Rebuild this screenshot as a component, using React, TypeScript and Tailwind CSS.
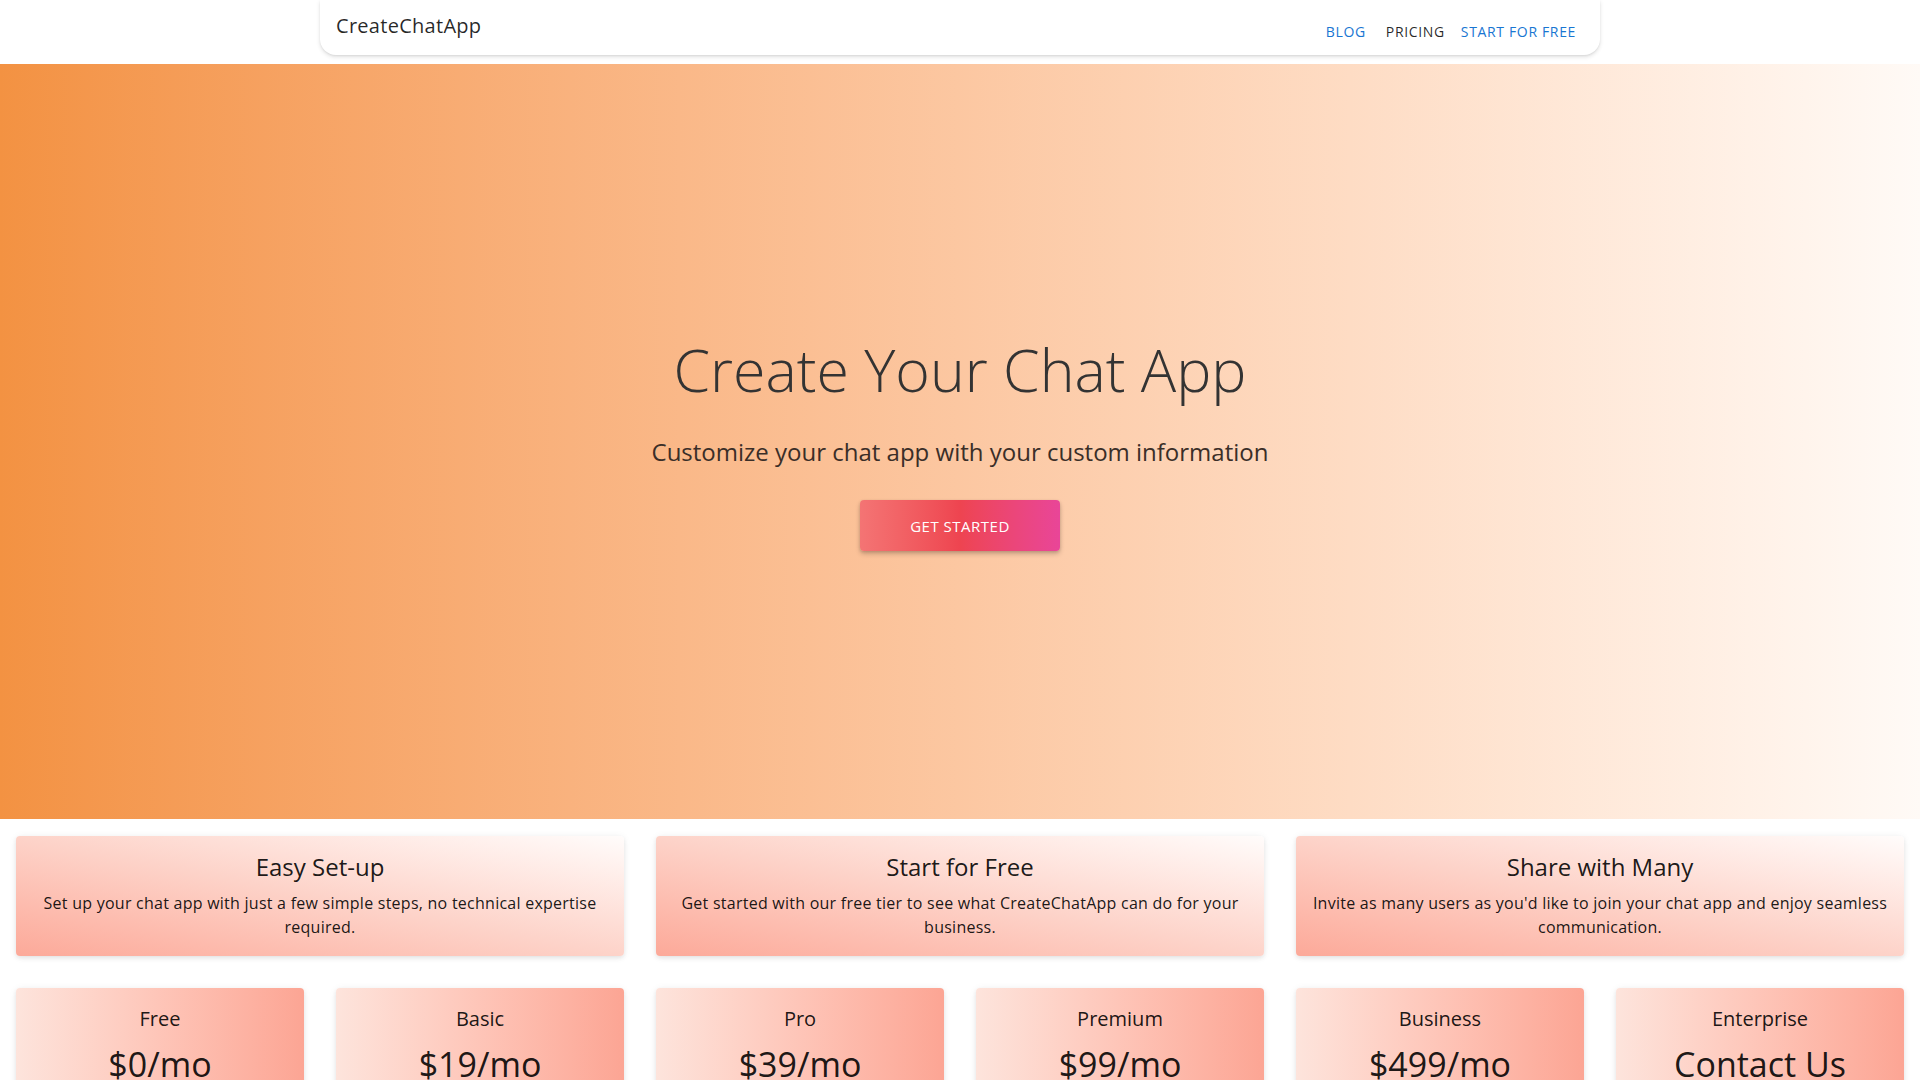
const features = [
  {
    title: 'Easy Set-up',
    body: 'Set up your chat app with just a few simple steps, no technical expertise required.',
  },
  {
    title: 'Start for Free',
    body: 'Get started with our free tier to see what CreateChatApp can do for your business.',
  },
  {
    title: 'Share with Many',
    body: "Invite as many users as you'd like to join your chat app and enjoy seamless communication.",
  },
]

const plans = [
  { name: 'Free', price: '$0/mo' },
  { name: 'Basic', price: '$19/mo' },
  { name: 'Pro', price: '$39/mo' },
  { name: 'Premium', price: '$99/mo' },
  { name: 'Business', price: '$499/mo' },
  { name: 'Enterprise', price: 'Contact Us' },
]

function NavBar() {
  return (
    <header className="h-16 bg-white">
      <div className="max-w-[1280px] mx-auto h-[55px] bg-white rounded-b-2xl shadow-[0_2px_4px_rgba(0,0,0,0.12),0_1px_2px_rgba(0,0,0,0.06)] flex items-center justify-between pl-4 pr-4">
        <span className="text-[20px] tracking-[0.28px] text-black/85 -mt-[4px]">CreateChatApp</span>
        <nav className="flex items-center mt-[8px] text-[14px] font-medium tracking-[0.65px] uppercase">
          <a className="min-w-[64px] px-2 py-1.5 text-center text-[#1976d2]">Blog</a>
          <a className="min-w-[64px] px-2 py-1.5 text-center text-black/85">Pricing</a>
          <a className="min-w-[64px] px-2 py-1.5 text-center text-[#1976d2]">Start for Free</a>
        </nav>
      </div>
    </header>
  )
}

function Hero() {
  return (
    <section className="h-[755px] pt-[2px] bg-linear-to-r from-[#f39242] to-[#fffaf6] flex flex-col items-center justify-center">
      <h1 className="text-[59px] font-light leading-[1.2] text-[#333]">Create Your Chat App</h1>
      <p className="mt-[32px] text-[24px] leading-[1.334] text-[#3a2e28]">
        Customize your chat app with your custom information
      </p>
      <button className="mt-[32px] w-[200px] h-[51px] rounded-[4px] bg-linear-to-r from-[#f47474] via-[#ee4450] to-[#e94598] text-white text-[15px] tracking-[0.5px] uppercase shadow-[0_3px_5px_rgba(0,0,0,0.2),0_1px_3px_rgba(0,0,0,0.12)]">
        Get Started
      </button>
    </section>
  )
}

export default function App() {
  return (
    <div className="min-h-screen bg-white" style={{ fontFamily: '"Open Sans", "Noto Sans", sans-serif' }}>
      <NavBar />
      <Hero />

      <div className="px-4 pt-[17px]">
        <div className="grid grid-cols-3 gap-8">
          {features.map((f) => (
            <div
              key={f.title}
              className="h-[120px] rounded-[4px] bg-linear-to-tr from-[#fca999] via-[#fdd3c9] to-[#fffcfb] shadow-[0_2px_4px_rgba(0,0,0,0.08),0_1px_8px_rgba(0,0,0,0.06)] px-4 pt-[15px] text-center text-black/90"
            >
              <h3 className="text-[24px] leading-[32px]">{f.title}</h3>
              <p className="mt-[8px] text-[16px] leading-[24px] tracking-[0.25px]">{f.body}</p>
            </div>
          ))}
        </div>

        <div className="grid grid-cols-6 gap-8 mt-[32px] pb-8">
          {plans.map((p) => (
            <div
              key={p.name}
              className="h-[200px] rounded-[4px] bg-linear-to-r from-[#fde4dc] to-[#fca594] shadow-[0_2px_4px_rgba(0,0,0,0.08),0_1px_8px_rgba(0,0,0,0.06)] pt-[15px] text-center text-black/90"
            >
              <h4 className="text-[20px] leading-[32px]">{p.name}</h4>
              <p className="mt-[8px] text-[34px] leading-[42px]">{p.price}</p>
            </div>
          ))}
        </div>
      </div>
    </div>
  )
}
